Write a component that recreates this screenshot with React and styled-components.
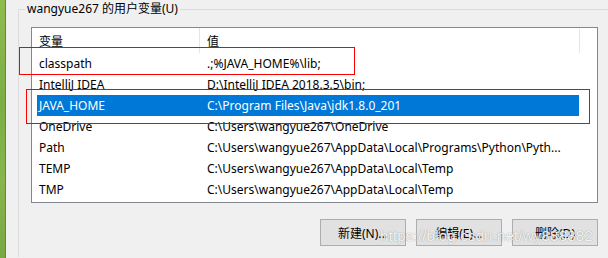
import { createGlobalStyle } from "styled-components";
import styled from "styled-components";

const GlobalStyle = createGlobalStyle`
  html, body {
    margin: 0;
    padding: 0;
    width: 608px;
    height: 258px;
    overflow: hidden;
    background: #f0f0f0;
  }
  body {
    font-family: "Noto Sans", "Noto Sans CJK SC", sans-serif;
    font-size: 12px;
    color: #000;
  }
`;

const Screen = styled.div`
  display: flex;
  height: 258px;
  overflow: hidden;
`;

const Desktop = styled.div`
  width: 5px;
  background: linear-gradient(180deg, #8fbc4f 0%, #7cae44 40%, #86b64c 70%, #78a840 100%);
`;

const Dialog = styled.div`
  position: relative;
  flex: 1;
  background: #f0f0f0;
  border-left: 1px solid #2b86d6;
  padding-left: 12px;
`;

const Group = styled.fieldset`
  margin: 0;
  padding: 0 10px 11px 12px;
  border: 1px solid #dcdcdc;
  border-right: none;
  border-bottom: none;
`;

const Legend = styled.legend`
  margin-left: -6px;
  padding: 0 2px;
  line-height: 18px;
  font-size: 12px;
`;

const ListBox = styled.div`
  margin-top: 9px;
  height: 176px;
  box-sizing: border-box;
  background: #fff;
  border: 1px solid #828790;
  padding: 0 18px 0 5px;
`;

const HeaderRow = styled.div`
  display: grid;
  grid-template-columns: 168px 1fr;
  height: 25px;
  align-items: center;
`;

const HeaderCell = styled.div`
  height: 100%;
  display: flex;
  align-items: center;
  padding-left: 2px;
  border-right: ${(p) => (p.$sep ? "1px solid #e5e5e5" : "none")};
  margin-right: ${(p) => (p.$sep ? "5px" : "0")};
`;

const HeaderFill = styled.div`
  position: relative;
  height: 100%;
  display: flex;
  align-items: center;
  padding-left: 2px;
  &::after {
    content: "";
    position: absolute;
    right: -1px;
    top: 1px;
    bottom: 0;
    width: 1px;
    background: #e5e5e5;
  }
`;

const Row = styled.div`
  display: grid;
  grid-template-columns: 168px 1fr;
  height: 21px;
  align-items: center;
  background: ${(p) => (p.$selected ? "#0078d7" : "transparent")};
  color: ${(p) => (p.$selected ? "#fff" : "#000")};
`;

const Cell = styled.div`
  padding-left: 2px;
  white-space: nowrap;
  overflow: hidden;
`;

const Buttons = styled.div`
  display: flex;
  justify-content: flex-end;
  gap: 10px;
  margin-top: 16px;
`;

const Button = styled.button`
  width: 86px;
  height: 27px;
  background: #e1e1e1;
  border: 1px solid #adadad;
  font-family: "Noto Sans", "Noto Sans CJK SC", sans-serif;
  font-size: 12px;
  color: #000;
  padding: 0;
`;

const Mark = styled.div`
  position: absolute;
  left: ${(p) => p.$x}px;
  top: ${(p) => p.$y}px;
  width: ${(p) => p.$w}px;
  height: ${(p) => p.$h}px;
  border: 1px solid #f00;
  box-sizing: border-box;
  pointer-events: none;
`;

const Watermark = styled.div`
  position: absolute;
  left: 374px;
  top: 227px;
  font-family: "Liberation Sans", Arial, sans-serif;
  font-size: 15px;
  color: rgba(255, 255, 255, 0.9);
  text-shadow: 0 0 1px rgba(90, 90, 90, 0.45), 0 0 1px rgba(90, 90, 90, 0.3);
  letter-spacing: 0.2px;
  pointer-events: none;
`;

const vars = [
  ["classpath", ".;%JAVA_HOME%\\lib;"],
  ["IntelliJ IDEA", "D:\\IntelliJ IDEA 2018.3.5\\bin;"],
  ["JAVA_HOME", "C:\\Program Files\\Java\\jdk1.8.0_201"],
  ["OneDrive", "C:\\Users\\wangyue267\\OneDrive"],
  ["Path", "C:\\Users\\wangyue267\\AppData\\Local\\Programs\\Python\\Pyth..."],
  ["TEMP", "C:\\Users\\wangyue267\\AppData\\Local\\Temp"],
  ["TMP", "C:\\Users\\wangyue267\\AppData\\Local\\Temp"],
];

export default function App() {
  return (
    <>
      <GlobalStyle />
      <Screen>
        <Desktop />
        <Dialog>
          <Group>
            <Legend>wangyue267 的用户变量(U)</Legend>
            <ListBox>
              <HeaderRow>
                <HeaderCell $sep>变量</HeaderCell>
                <HeaderFill>值</HeaderFill>
              </HeaderRow>
              {vars.map(([name, value]) => (
                <Row key={name} $selected={name === "JAVA_HOME"}>
                  <Cell>{name}</Cell>
                  <Cell>{value}</Cell>
                </Row>
              ))}
            </ListBox>
            <Buttons>
              <Button>新建(N)...</Button>
              <Button>编辑(E)...</Button>
              <Button>删除(D)</Button>
            </Buttons>
          </Group>
          <Mark $x={13} $y={47} $w={336} $h={28} />
          <Mark $x={20} $y={89} $w={564} $h={35} />
          <Watermark>https://blog.csdn.net/wy888882</Watermark>
        </Dialog>
      </Screen>
    </>
  );
}
